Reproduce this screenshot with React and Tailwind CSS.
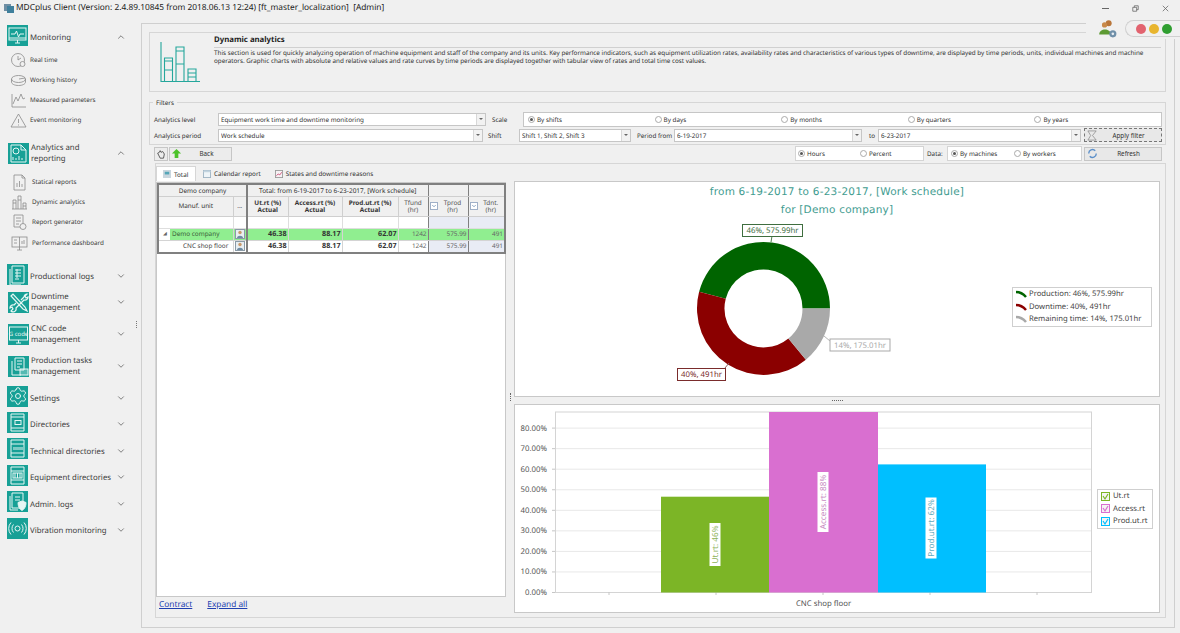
import { ChevronDown, ChevronUp, Settings as GearIcon } from 'lucide-react';

const ln = { fill: 'none', stroke: 'currentColor', strokeWidth: 1 };

const tileIcons = {
    monitor: (
        <g {...ln}>
            <rect x="2" y="3" width="17" height="12" />
            <path d="M4 9h4l1.500-3 2 6 1.500-3h4M2 13h17M8 18h5M10.500 15v3" />
        </g>
    ),
    analytics: (
        <g {...ln}>
            <path d="M3 2h10l5 5v12H3zM13 2v5h5" />
            <circle cx="8" cy="8" r="3" />
            <path d="M5 17v-3M8 17v-2M11 17v-4M14 17v-2" />
        </g>
    ),
    doc: (
        <g {...ln}>
            <path d="M5 2h12v17H5zM3 5v16h11" />
            <path d="M8 6h6M8 9h6M8 12h6M8 15h4M10 5v9" />
        </g>
    ),
    tools: (
        <g fill="none" stroke="currentColor" strokeWidth="1.200">
            <path d="M3 4l2-2 12 13 2 4-4-2zM13 8l3-3a3 3 0 0 1 3-3l-2 2 1 2 2-1a3 3 0 0 1-4 3L8 16a3 3 0 0 1-5 3l2-2-1-2-2 1a3 3 0 0 1 4-3l2-2" />
        </g>
    ),
    code: (
        <g>
            <rect x="1.500" y="3" width="18" height="13" {...ln} />
            <path d="M8 19h5M10.500 16v3" {...ln} />
            <text x="10.500" y="12" fontSize="6" textAnchor="middle" fill="currentColor">G code</text>
        </g>
    ),
    tasks: (
        <g {...ln}>
            <path d="M7 2h9v12H7zM4 5v14h9" />
            <path d="M9 5h5M9 8h5M9 11h3" />
            <rect x="12" y="13" width="8" height="6" fill="currentColor" fillOpacity=".3" />
        </g>
    ),
    book: (
        <g {...ln}>
            <path d="M4 2h13v17H4zM4 5h13M4 16h13" />
            <rect x="8" y="8.500" width="6" height="4" />
        </g>
    ),
    tech: (
        <g {...ln}>
            <path d="M4 2h13v17H4zM4 6h13M4 15h13" />
            <path d="M7 9v3M9 9v3M11 9v3M13 9v3M15 9v3" />
        </g>
    ),
    equip: (
        <g {...ln}>
            <path d="M4 2h13v17H4zM4 6h13M4 15h13" />
            <rect x="6" y="8" width="9" height="5" />
            <path d="M8 8v5M10.500 8v5M13 8v5" />
        </g>
    ),
    admin: (
        <g {...ln}>
            <path d="M5 2h11v15H5zM3 5v14h8" />
            <path d="M8 6h5M8 9h5" />
            <path d="M15 10l4 1.500c0 4-1.500 6.500-4 8-2.500-1.500-4-4-4-8z" fill="currentColor" />
        </g>
    ),
    vibration: (
        <g {...ln}>
            <circle cx="10.500" cy="10.500" r="2.500" />
            <path d="M6.500 6.500a6 6 0 0 0 0 8M14.500 6.500a6 6 0 0 1 0 8M4 4.500a9 9 0 0 0 0 12M17 4.500a9 9 0 0 1 0 12" />
        </g>
    ),
};

const subIcons = {
    clock: (
        <g>
            <circle cx="8" cy="8" r="6.500" />
            <path d="M8 4v4l3-2" />
            <circle cx="12.500" cy="12" r="2.500" fill="#f0f0f0" />
        </g>
    ),
    disc: (
        <g>
            <ellipse cx="8.500" cy="7" rx="7" ry="3.500" />
            <path d="M1.500 7v3c0 2 3 3.500 7 3.500s7-1.500 7-3.500V7M9 7l6-1" />
        </g>
    ),
    wave: <path d="M2 2v13h14M3 12l3-7 2 4 3-7 2 5 2-1" />,
    warn: <path d="M8.500 2L1 15h15zM8.500 7v4M8.500 12.500v1" />,
    report: (
        <g>
            <path d="M3 1h8l3 3v12H3zM11 1v3h3" />
            <path d="M6 13V9M8.500 13V7M11 13v-3" />
        </g>
    ),
    bars: <path d="M1 15h15M2 15V6h3v9M7 15V2h3v13M12 15V9h3v6M2 9h3M7 6h3M12 12h3" />,
    calc: (
        <g>
            <path d="M3 1h9v12H3zM5 4h5M5 7h5M5 10h3" />
            <circle cx="12" cy="12.500" r="3" fill="#f0f0f0" />
        </g>
    ),
    dash: (
        <g>
            <rect x="1" y="2" width="15" height="10" />
            <path d="M8.500 2v10M3 5h3M3 8h3M11 9V6M13 9V5M6 15h5M8.500 12v3" />
        </g>
    ),
};

const menu = [
    {
        label: 'Monitoring',
        icon: 'monitor',
        open: true,
        cls: 'h-[26px] pl-[7px]',
        items: [
            ['Real time', 'clock'],
            ['Working history', 'disc'],
            ['Measured parameters', 'wave'],
            ['Event monitoring', 'warn'],
        ],
        itemCls: 'h-5 pl-[10px] gap-[3px]',
    },
    {
        label: ['Analytics and', 'reporting'],
        icon: 'analytics',
        open: true,
        cls: 'h-8 mt-[7px] pl-[8px]',
        items: [
            ['Statical reports', 'report'],
            ['Dynamic analytics', 'bars'],
            ['Report generator', 'calc'],
            ['Performance dashboard', 'dash'],
        ],
        itemCls: 'h-[20.300px] pl-[11px] gap-1',
        listCls: 'mt-[3px] mb-[10px]',
    },
    { label: 'Productional logs', icon: 'doc', cls: 'h-[26px] pl-[7px]' },
    { label: ['Downtime', 'management'], icon: 'tools', cls: 'h-8 -mt-[3px] pl-[8px]' },
    { label: ['CNC code', 'management'], icon: 'code', cls: 'h-8 pl-[8px]' },
    { label: ['Production tasks', 'management'], icon: 'tasks', cls: 'h-8 pl-[8px]' },
    { label: 'Settings', icon: 'gear', cls: 'h-[26px] mt-[3px] pl-[7px]' },
    { label: 'Directories', icon: 'book', cls: 'h-[26.500px] pl-[7px]' },
    { label: 'Technical directories', icon: 'tech', cls: 'h-[26.500px] pl-[7px]' },
    { label: 'Equipment directories', icon: 'equip', cls: 'h-[26.500px] pl-[7px]' },
    { label: 'Admin. logs', icon: 'admin', cls: 'h-[26.500px] pl-[7px]' },
    { label: 'Vibration monitoring', icon: 'vibration', cls: 'h-[26.500px] pl-[7px]' },
];

function Tile({ icon, raised }) {
    return (
        <div className={`flex h-[21px] w-[21px] shrink-0 items-center justify-center bg-[#17a096] text-[#e6f6f4] ${raised ? '-mt-[4px]' : ''}`}>
            {icon === 'gear' ? (
                <GearIcon size={20} strokeWidth={1.200} />
            ) : (
                <svg viewBox="0 0 21 21" width="21" height="21">
                    {tileIcons[icon]}
                </svg>
            )}
        </div>
    );
}

function Sidebar() {
    return (
        <aside className="relative w-[141px] shrink-0 pt-[1px] text-[7.800px] leading-[10.700px] text-[#3c3c3c]">
            {menu.map((group) => (
                <div key={group.icon}>
                    <div className={`flex items-center pr-[15px] ${group.cls}`}>
                        <Tile icon={group.icon} raised={!Array.isArray(group.label)} />
                        <span className="ml-[2px] flex-1 pt-[2px] whitespace-nowrap">
                            {Array.isArray(group.label) ? (
                                <>
                                    {group.label[0]}
                                    <br />
                                    {group.label[1]}
                                </>
                            ) : (
                                group.label
                            )}
                        </span>
                        {group.open ? <ChevronUp size={10} strokeWidth={1.500} /> : <ChevronDown size={10} strokeWidth={1.500} />}
                    </div>
                    {group.items ? (
                        <ul className={group.listCls}>
                            {group.items.map(([name, icon]) => (
                                <li key={name} className={`flex items-center text-[6.300px] ${group.itemCls}`}>
                                    <svg viewBox="0 0 17 17" width="17" height="17" fill="none" stroke="#8a8a8a" strokeWidth="0.800">
                                        {subIcons[icon]}
                                    </svg>
                                    <span className="whitespace-nowrap">{name}</span>
                                </li>
                            ))}
                        </ul>
                    ) : null}
                </div>
            ))}
            <div className="absolute top-[298px] right-[4px] flex flex-col gap-[1px]">
                <i className="h-[1px] w-[1px] bg-[#777]" />
                <i className="h-[1px] w-[1px] bg-[#777]" />
                <i className="h-[1px] w-[1px] bg-[#777]" />
                <i className="h-[1px] w-[1px] bg-[#777]" />
            </div>
        </aside>
    );
}

function Combo({ w, text }) {
    return (
        <div className={`flex h-[13px] items-center border border-[#c6c6c6] bg-white pl-[2px] ${w}`}>
            <span className="flex-1 truncate">{text}</span>
            <span className="flex h-full w-[9px] items-center justify-center border-l border-[#d8d8d8] bg-[#f2f2f2]">
                <i className="border-x-[2px] border-t-[2px] border-x-transparent border-t-[#666]" />
            </span>
        </div>
    );
}

function Radio({ label, checked }) {
    return (
        <span className="flex items-center gap-[2px] whitespace-nowrap">
            <span className="flex h-[7px] w-[7px] items-center justify-center rounded-full border border-[#aaa] bg-white">
                {checked ? <i className="h-[3px] w-[3px] rounded-full bg-[#555]" /> : null}
            </span>
            {label}
        </span>
    );
}

function Filters() {
    return (
        <div className="relative mt-[10px] ml-[7px] h-[43px] w-[1017px] border border-[#d6d6d6] pt-[8px] pl-[4px]">
            <span className="absolute -top-[5px] left-[3px] bg-[#f0f0f0] px-[3px] leading-[9px]">Filters</span>
            <div className="flex h-[16px] items-center whitespace-nowrap">
                <span className="w-[64px]">Analytics level</span>
                <Combo w="w-[268px]" text="Equipment work time and downtime monitoring" />
                <span className="ml-[6px] w-[31px]">Scale</span>
                <div className="grid h-[15px] w-[639px] grid-cols-5 items-center border border-[#c6c6c6] bg-white pl-[4px]">
                    <Radio label="By shifts" checked />
                    <Radio label="By days" />
                    <Radio label="By months" />
                    <Radio label="By quarters" />
                    <Radio label="By years" />
                </div>
            </div>
            <div className="flex h-[16px] items-center whitespace-nowrap">
                <span className="w-[64px]">Analytics period</span>
                <Combo w="w-[265px]" text="Work schedule" />
                <span className="ml-[5px] w-[31px]">Shift</span>
                <Combo w="w-[112px]" text="Shift 1, Shift 2, Shift 3" />
                <span className="ml-[6px] w-[37px]">Period from</span>
                <Combo w="w-[188px]" text="6-19-2017" />
                <span className="ml-[7px] w-[9px]">to</span>
                <Combo w="w-[203px]" text="6-23-2017" />
                <button type="button" className="ml-[3px] flex h-[14px] w-[78px] items-center border border-dashed border-[#777] bg-[#e8e8e8] px-[2px]">
                    <svg viewBox="0 0 12 12" width="11" height="11" fill="none" stroke="#888" strokeWidth="0.800">
                        <path d="M1 1h9L6 6l4 5H1l3-5z" />
                    </svg>
                    <span className="flex-1 text-center">Apply filter</span>
                </button>
            </div>
        </div>
    );
}

function Toolbar() {
    return (
        <div className="mt-[1px] ml-[12px] flex h-[15px] w-[1008px] items-center">
            <button type="button" className="flex h-[14px] w-[14px] items-center justify-center border border-[#c6c6c6] bg-[#ececec]">
                <svg viewBox="0 0 12 12" width="10" height="10" fill="none" stroke="#444" strokeWidth="1">
                    <path d="M2 5l3 6h4l1-5-2-3-2 1-1-2-1 2z" />
                </svg>
            </button>
            <button type="button" className="ml-[1px] flex h-[14px] w-[63px] items-center border border-[#c6c6c6] bg-[#ececec] pl-[1px]">
                <svg viewBox="0 0 12 12" width="11" height="11">
                    <path d="M6 1l5 5H8v5H4V6H1z" fill="#4cc22a" />
                </svg>
                <span className="flex-1 text-center">Back</span>
            </button>
            <div className="ml-auto flex h-[15px] w-[129px] items-center border border-[#d4d4d4] bg-white pl-[2px]">
                <span className="w-[62px]">
                    <Radio label="Hours" checked />
                </span>
                <Radio label="Percent" />
            </div>
            <span className="ml-[3px] w-[20px]">Data:</span>
            <div className="flex h-[15px] w-[135px] items-center border border-[#d4d4d4] bg-white pl-[3px]">
                <span className="w-[63px]">
                    <Radio label="By machines" checked />
                </span>
                <Radio label="By workers" />
            </div>
            <button type="button" className="ml-[2px] flex h-[14px] w-[78px] items-center border border-[#c6c6c6] bg-[#e8e8e8] px-[2px]">
                <svg viewBox="0 0 12 12" width="11" height="11" fill="none" stroke="#5b8fc9" strokeWidth="1.500">
                    <path d="M2 6a4 4 0 0 1 7-3M10 6a4 4 0 0 1-7 3" />
                </svg>
                <span className="flex-1 text-center">Refresh</span>
            </button>
        </div>
    );
}

function Tabs() {
    return (
        <div className="flex h-[17px] items-end">
            <div className="flex h-[15px] w-[40px] items-center gap-[3px] border border-b-0 border-[#d6d6d6] bg-white pl-[6px]">
                <svg viewBox="0 0 9 9" width="8" height="8">
                    <rect width="9" height="9" fill="#c9d6de" />
                    <rect x="2" y="2" width="5" height="3" fill="#55a6b8" />
                </svg>
                Total
            </div>
            <div className="ml-[7px] flex h-[15px] items-center gap-[3px]">
                <svg viewBox="0 0 9 9" width="8" height="8">
                    <rect x=".5" y=".5" width="8" height="8" fill="#eef4f8" stroke="#9db2c2" />
                    <rect x=".5" y=".5" width="8" height="2" fill="#c2d4e0" />
                </svg>
                Calendar report
            </div>
            <div className="ml-[14px] flex h-[15px] items-center gap-[3px]">
                <svg viewBox="0 0 9 9" width="8" height="8">
                    <rect x=".5" y=".5" width="8" height="8" fill="#f6f2f4" stroke="#9a9a9a" />
                    <path d="M1.500 6.500l2-2 2 1 2-3" stroke="#d0507a" fill="none" />
                </svg>
                States and downtime reasons
            </div>
        </div>
    );
}

const dataRows = [
    { name: 'Demo company', ut: '46.38', access: '88.17', prod: '62.07', fund: '1242', tprod: '575.99', tdnt: '491', green: true, h: 'h-[12px]' },
    { name: 'CNC shop floor', ut: '46.38', access: '88.17', prod: '62.07', fund: '1242', tprod: '575.99', tdnt: '491', h: 'h-[13px]' },
];

function Avatar() {
    return (
        <svg viewBox="0 0 10 10" width="10" height="10" className="mx-auto block">
            <rect x=".5" y=".5" width="9" height="9" fill="#e8eef2" stroke="#8a9aa6" />
            <circle cx="5" cy="3.500" r="1.700" fill="#c99a6b" />
            <path d="M2 9c0-3 6-3 6 0z" fill="#6d8ba3" />
        </svg>
    );
}

function SortBox() {
    return (
        <span className="flex h-[8px] w-[8px] shrink-0 items-center justify-center border border-[#9fb0c8] bg-white">
            <ChevronDown size={6} strokeWidth={2.500} className="text-[#47719f]" />
        </span>
    );
}

function ReportTable() {
    const th = 'border border-[#cfcfcf] bg-[#f0f0f0] font-normal leading-[7.500px]';
    const thick = 'border-r-2 border-r-[#808080]';
    const mid = 'border-r border-r-[#808080]';
    const blue = 'bg-[#e9ecf5]';

    return (
        <table className="w-[347px] table-fixed border-collapse border-2 border-[#808080] text-center text-[6.400px]">
            <colgroup>
                <col className="w-[75px]" />
                <col className="w-[14px]" />
                <col className="w-[41px]" />
                <col className="w-[54px]" />
                <col className="w-[56px]" />
                <col className="w-[30px]" />
                <col className="w-[40px]" />
                <col className="w-[37px]" />
            </colgroup>
            <thead>
                <tr className="h-[12px]">
                    <th colSpan={2} className={`${th} ${thick}`}>Demo company</th>
                    <th colSpan={4} className={`${th} ${mid} text-[6.500px]`}>Total: from 6-19-2017 to 6-23-2017, [Work schedule]</th>
                    <th className={`${th} ${mid}`} />
                    <th className={th} />
                </tr>
                <tr className="h-[20px]">
                    <th className={th}>Manuf. unit</th>
                    <th className={`${th} ${thick}`}>...</th>
                    <th className={th}><b>Ut.rt (%)<br />Actual</b></th>
                    <th className={th}><b>Access.rt (%)<br />Actual</b></th>
                    <th className={th}><b>Prod.ut.rt (%)<br />Actual</b></th>
                    <th className={`${th} ${mid} text-[#555]`}>Tfund<br />(hr)</th>
                    <th className={`${th} ${mid} text-[#555]`}>
                        <span className="flex items-center pl-[1px]"><SortBox /><span className="flex-1">Tprod<br />(hr)</span></span>
                    </th>
                    <th className={`${th} text-[#555]`}>
                        <span className="flex items-center pl-[1px]"><SortBox /><span className="flex-1">Tdnt.<br />(hr)</span></span>
                    </th>
                </tr>
            </thead>
            <tbody>
                <tr className="h-[12px] bg-white">
                    <td className="border border-[#dedede]" />
                    <td className={`border border-[#dedede] ${thick}`} />
                    <td className="border border-[#dedede]" />
                    <td className="border border-[#dedede]" />
                    <td className="border border-[#dedede]" />
                    <td className={`border border-[#dedede] ${mid}`} />
                    <td className={`border border-[#dedede] ${mid} ${blue}`} />
                    <td className={`border border-[#dedede] ${blue}`} />
                </tr>
                {dataRows.map((row) => (
                    <tr key={row.name} className={`${row.h} leading-[8px] text-right`}>
                        <td className="border border-[#d4d4d4] bg-white p-0 text-left">
                            {row.green ? (
                                <span className="flex h-[11px] items-center">
                                    <span className="w-[11px] pl-[4px] text-[5px] text-[#666]">◢</span>
                                    <span className="flex h-full flex-1 items-center bg-[#90ee90] pl-[2px] text-[#3a5c3a]">{row.name}</span>
                                </span>
                            ) : (
                                <span className="pl-[24px] text-[#444]">{row.name}</span>
                            )}
                        </td>
                        <td className={`border border-[#d4d4d4] p-0 ${thick} ${row.green ? 'bg-[#90ee90]' : 'bg-white'}`}><Avatar /></td>
                        <td className={`border border-[#d4d4d4] pr-[1px] text-[7.200px] font-bold ${row.green ? 'bg-[#90ee90]' : 'bg-white'}`}>{row.ut}</td>
                        <td className={`border border-[#d4d4d4] pr-[1px] text-[7.200px] font-bold ${row.green ? 'bg-[#90ee90]' : 'bg-white'}`}>{row.access}</td>
                        <td className={`border border-[#d4d4d4] pr-[1px] text-[7.200px] font-bold ${row.green ? 'bg-[#90ee90]' : 'bg-white'}`}>{row.prod}</td>
                        <td className={`border border-[#d4d4d4] pr-[1px] text-[#666] ${mid} ${row.green ? 'bg-[#90ee90]' : 'bg-white'}`}>{row.fund}</td>
                        <td className={`border border-[#d4d4d4] pr-[1px] text-[#666] ${mid} ${row.green ? 'bg-[#90ee90]' : blue}`}>{row.tprod}</td>
                        <td className={`border border-[#d4d4d4] pr-[1px] text-[#666] ${row.green ? 'bg-[#90ee90]' : blue}`}>{row.tdnt}</td>
                    </tr>
                ))}
            </tbody>
        </table>
    );
}

// donut slices go counter-clockwise from 3 o'clock, same as the report chart
function arc(startDeg, endDeg) {
    const cx = 763.5;
    const cy = 308.4;
    const R = 66.5;
    const r = 39;
    const pt = (rad, deg) => {
        const a = (deg * Math.PI) / 180;
        return `${(cx + rad * Math.cos(a)).toFixed(2)} ${(cy - rad * Math.sin(a)).toFixed(2)}`;
    };
    const large = endDeg - startDeg > 180 ? 1 : 0;
    return `M${pt(R, startDeg)}A${R} ${R} 0 ${large} 0 ${pt(R, endDeg)}L${pt(r, endDeg)}A${r} ${r} 0 ${large} 1 ${pt(r, startDeg)}Z`;
}

function DonutLabel({ x, y, w, color, text }) {
    return (
        <g>
            <rect x={x + 0.5} y={y + 0.5} width={w} height="12" fill="#fff" stroke={color} />
            <text x={x + w / 2 + 0.5} y={y + 9.200} fontSize="7.800" textAnchor="middle" fill={color}>{text}</text>
        </g>
    );
}

function DonutPanel() {
    return (
        <div className="relative h-[216px] border border-[#c8c8c8] bg-white">
            <svg viewBox="515 182 644 214" className="absolute inset-0 h-full w-full">
                <path d={arc(0, 165.6)} fill="#006400" />
                <path d={arc(165.6, 309.6)} fill="#8b0000" />
                <path d={arc(309.6, 360)} fill="#a9a9a9" />
                <path d="M772 236l-1 6" stroke="#4d7f4d" />
                <path d="M824 336l6 5" stroke="#b5b5b5" />
                <path d="M725 368l4-5" stroke="#8b6060" />
                <DonutLabel x={742} y={224} w={60} color="#3f6e3f" text="46%, 575.99hr" />
                <DonutLabel x={829.500} y={338.500} w={60} color="#a9a9a9" text="14%, 175.01hr" />
                <DonutLabel x={677} y={368} w={48} color="#7a2c2c" text="40%, 491hr" />
            </svg>
            <div className="relative pt-[1px] text-center font-['DejaVu_Sans',sans-serif] text-[10.500px] leading-[18px] tracking-[0.200px] text-[#3f9c90]">
                <p>from 6-19-2017 to 6-23-2017, [Work schedule]</p>
                <p>for [Demo company]</p>
            </div>
            <ul className="absolute top-[105px] right-[7px] w-[140px] border border-[#cfcfcf] bg-white pl-[2px] text-[7.700px] leading-[12.500px] text-[#444]">
                {[
                    ['Production: 46%, 575.99hr', '#006400'],
                    ['Downtime: 40%, 491hr', '#8b0000'],
                    ['Remaining time: 14%, 175.01hr', '#a9a9a9'],
                ].map(([name, color]) => (
                    <li key={name} className="flex items-center gap-[2px] whitespace-nowrap">
                        <svg viewBox="0 0 12 8" width="12" height="8">
                            <path d="M1 2c4 0 7 1.500 10 5" stroke={color} strokeWidth="2.500" fill="none" />
                        </svg>
                        {name}
                    </li>
                ))}
            </ul>
        </div>
    );
}

const bars = [
    { x: 661, w: 108, y: 496.700, color: '#7cb526', text: 'Ut.rt: 46%', tx: 715, ty: 544.500, bh: 43, textColor: '#8eb35a' },
    { x: 769, w: 109, y: 412, color: '#d96fd0', text: 'Access.rt: 88%', tx: 823, ty: 502, bh: 60, textColor: '#c78ac2' },
    { x: 878, w: 108, y: 464.400, color: '#00bfff', text: 'Prod.ut.rt: 62%', tx: 931, ty: 528, bh: 61, textColor: '#5fa9bd' },
];

function BarPanel() {
    const ticks = [0, 10, 20, 30, 40, 50, 60, 70, 80];

    return (
        <div className="relative h-[209px] border border-[#c8c8c8] bg-white">
            <svg viewBox="515 405 644 207" className="absolute inset-0 h-full w-full">
                {ticks.map((t) => {
                    const y = 592.500 - t * 2.055;
                    return (
                        <g key={t}>
                            {t > 0 ? <line x1="555" x2="1091" y1={y} y2={y} stroke="#e8e8e8" /> : null}
                            <line x1="552" x2="555.500" y1={y} y2={y} stroke="#c6c6c6" />
                            <text x="547" y={y + 2.500} fontSize="7.800" textAnchor="end" fill="#555">{t}.00%</text>
                        </g>
                    );
                })}
                <rect x="555.500" y="412" width="536" height="180.500" fill="none" stroke="#d4d4d4" />
                {[609, 716, 823, 930, 1037].map((x) => (
                    <line key={x} x1={x} x2={x} y1="592" y2="595" stroke="#c6c6c6" />
                ))}
                {bars.map((bar) => (
                    <g key={bar.text}>
                        <rect x={bar.x} y={bar.y} width={bar.w} height={592.500 - bar.y} fill={bar.color} />
                        <rect x={bar.tx - 5.500} y={bar.ty - bar.bh / 2} width="11" height={bar.bh} fill="#fff" />
                        <text
                            x={bar.tx}
                            y={bar.ty}
                            fontSize="8.200"
                            textAnchor="middle"
                            fill={bar.textColor}
                            transform={`rotate(-90 ${bar.tx} ${bar.ty}) translate(0 2.800)`}
                        >
                            {bar.text}
                        </text>
                    </g>
                ))}
                <text x="823.500" y="606" fontSize="7.800" textAnchor="middle" fill="#555">CNC shop floor</text>
            </svg>
            <ul className="absolute top-[84px] right-[6px] w-[56px] border border-[#cfcfcf] bg-white pl-[3px] text-[7.700px] leading-[12.500px] text-[#444]">
                {[
                    ['Ut.rt', '#7cb526'],
                    ['Access.rt', '#d96fd0'],
                    ['Prod.ut.rt', '#00bfff'],
                ].map(([name, color]) => (
                    <li key={name} className="flex items-center gap-[3px] whitespace-nowrap">
                        <svg viewBox="0 0 9 9" width="9" height="9" fill="none" stroke={color}>
                            <rect x=".5" y=".5" width="8" height="8" fill="#f4f4f4" />
                            <path d="M2 4l2 3 3-5" strokeWidth="1.200" />
                        </svg>
                        {name}
                    </li>
                ))}
            </ul>
        </div>
    );
}

function TabPanel() {
    return (
        <div className="mt-[2px] ml-[13px] flex h-[455px] w-[1011px] flex-col border border-[#d6d6d6] text-[6.300px]">
            <Tabs />
            <div className="flex flex-1">
                <div className="flex w-[350px] flex-col pt-[1px]">
                    <div className="h-[415px] border border-[#c8c8c8] bg-white">
                        <ReportTable />
                    </div>
                    <div className="flex gap-[15px] pt-[3px] pl-[3px] text-[8.300px] leading-[10px] text-[#1f3fb0] underline">
                        <span>Contract</span>
                        <span>Expand all</span>
                    </div>
                </div>
                <div className="flex w-[8px] flex-col items-center pt-[212px]">
                    <i className="h-[8px] border-l border-dotted border-[#666]" />
                </div>
                <div className="flex w-[646px] flex-col">
                    <DonutPanel />
                    <div className="flex h-[7px] items-center justify-center">
                        <i className="w-[11px] border-t border-dotted border-[#666]" />
                    </div>
                    <BarPanel />
                </div>
            </div>
        </div>
    );
}

function UserWidget() {
    return (
        <div className="absolute top-[18px] right-0 flex h-[21px] w-[94px] items-center bg-[#f0f0f0]">
            <svg viewBox="0 0 16 16" width="19" height="19" className="ml-[12px] shrink-0">
                <circle cx="9" cy="3.500" r="2.500" fill="#b9763a" />
                <circle cx="5.500" cy="5" r="2.200" fill="#c98a4a" />
                <path d="M1 13c0-5 9-6 10 0z" fill="#5d9a33" />
                <circle cx="12.500" cy="12.500" r="3" fill="#6f8fa8" />
                <circle cx="12.500" cy="12.500" r="1.100" fill="#e8eef2" />
            </svg>
            <div className="ml-[8px] flex h-[17px] flex-1 items-center gap-[3px] rounded-l-[9px] border border-r-0 border-[#d0d0d0] pl-[10px]">
                <i className="h-[10px] w-[10px] rounded-full bg-[#e2636f]" />
                <i className="h-[10px] w-[10px] rounded-full bg-[#e8b52e]" />
                <i className="h-[10px] w-[10px] rounded-full bg-[#2f9e30]" />
            </div>
        </div>
    );
}

export default function App() {
    return (
        <div className="relative flex h-[633px] w-[1180px] flex-col overflow-hidden bg-[#f0f0f0] font-['Noto_Sans',sans-serif] text-[#333] [text-rendering:geometricPrecision]">
            <header className="flex h-[23px] shrink-0 items-start pt-[2px] text-[8.350px] leading-[11px] text-[#222]">
                <svg viewBox="0 0 12 12" width="12" height="12" className="ml-[3px]">
                    <rect x="1" y="2" width="7" height="7" fill="#6f8ea3" />
                    <rect x="4" y="4" width="7" height="7" fill="#3f7f9c" />
                </svg>
                <span className="ml-[1px] whitespace-pre">MDCplus Client (Version: 2.4.89.10845 from 2018.06.13 12:24) [ft_master_localization]  [Admin]</span>
                <div className="ml-auto flex items-center gap-[23px] pt-[3px] pr-[11px]">
                    <i className="h-[1px] w-[7px] bg-[#666]" />
                    <svg viewBox="0 0 9 9" width="7" height="7" fill="none" stroke="#666">
                        <path d="M1 3h5v5H1zM3 3V1h5v5H6" />
                    </svg>
                    <svg viewBox="0 0 9 9" width="7" height="7" fill="none" stroke="#666">
                        <path d="M1 1l7 7M8 1l-7 7" />
                    </svg>
                </div>
            </header>
            <div className="flex flex-1">
                <Sidebar />
                <main className="h-[605px] w-[1034px] border border-[#cfcfcf] text-[6.300px] leading-[9px]">
                    <section className="mt-[8px] ml-[7px] flex h-[60px] w-[1017px] border border-[#d6d6d6] pt-[2px]">
                        <svg viewBox="0 0 40 40" width="40" height="40" className="mt-[7px] ml-[10px] shrink-0" fill="none" stroke="#25a79c" strokeWidth="1.100">
                            <path d="M1 0v39.500h39M4.500 39.500V16h8v23.500M4.500 19h8M4.500 28h8M16 39.500V5h8v34.500M16 9h8M16 22h8M28 39.500V27h8v12.500M28 31h8M28 35h8" />
                        </svg>
                        <div className="ml-[14px] flex-1 pr-[4px]">
                            <h1 className="border-b border-[#d0d0d0] pb-[2px] text-[7.800px] leading-[10px] font-bold text-[#222]">Dynamic analytics</h1>
                            <p className="mt-[1px] leading-[8px] whitespace-nowrap text-[#333]">
                                This section is used for quickly analyzing operation of machine equipment and staff of the company and its units. Key performance indicators, such as equipment utilization rates, availability rates and characteristics of various types of downtime, are displayed by time periods, units, individual machines and machine
                                <br />
                                operators. Graphic charts with absolute and relative values and rate curves by time periods are displayed together with tabular view of rates and total time cost values.
                            </p>
                        </div>
                    </section>
                    <Filters />
                    <Toolbar />
                    <TabPanel />
                </main>
            </div>
            <UserWidget />
        </div>
    );
}
